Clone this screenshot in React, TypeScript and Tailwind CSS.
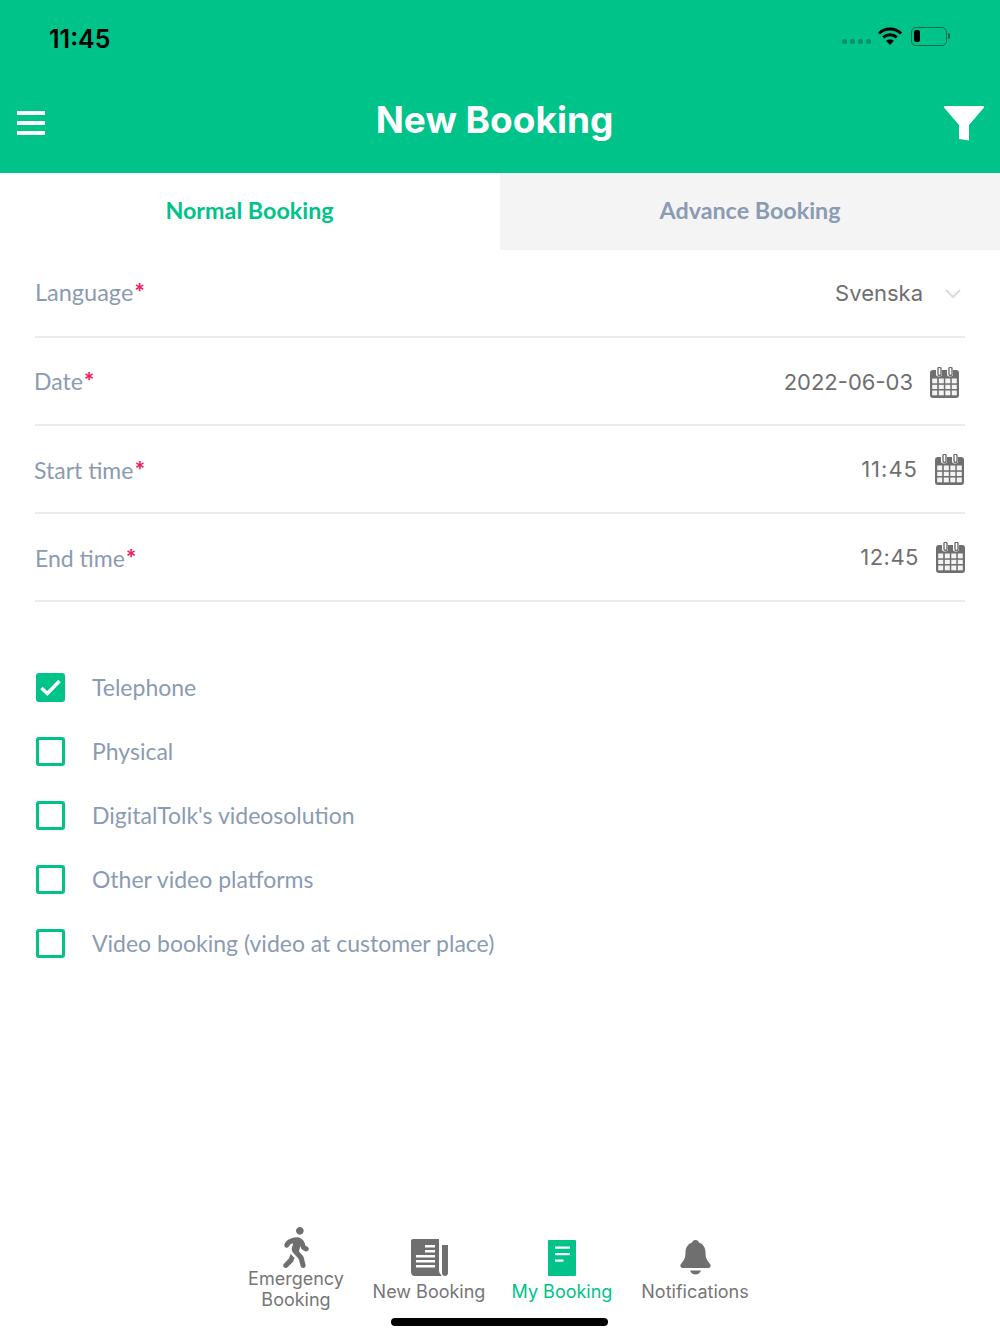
import { FaWalking } from 'react-icons/fa'

function Wifi() {
  return (
    <svg width="26" height="20" viewBox="0 0 26 20" fill="none" stroke="#000" strokeWidth="3">
      <path d="M2 7.5C8 1.6 18 1.6 24 7.5" />
      <path d="M6.2 11.4C10.2 7.8 15.8 7.8 19.8 11.4" />
      <path d="M13 19l-4-4.2c2.3-1.800 5.700-1.800 8 0z" fill="#000" stroke="none" />
    </svg>
  )
}

function Battery() {
  return (
    <div className="flex items-center">
      <div className="flex h-[19px] w-[36px] items-center rounded-[5px] border-[1.5px] border-[#0b6b4e] pl-[2px]">
        <div className="h-[12px] w-[6px] rounded-[2px] bg-black" />
      </div>
      <div className="ml-[1px] h-[6px] w-[2px] rounded-r-sm bg-[#0b6b4e]" />
    </div>
  )
}

function CalendarIcon() {
  return (
    <svg width="29" height="31" viewBox="0 0 29 31" fill="#6f6f6f">
      <path d="M3 3h3v4a2.500 2.500 0 0 0 2.500 2.500h1A2.500 2.500 0 0 0 12 7V3h5v4a2.500 2.500 0 0 0 2.500 2.500h1A2.500 2.500 0 0 0 23 7V3h3a3 3 0 0 1 3 3v22a3 3 0 0 1-3 3H3a3 3 0 0 1-3-3V6a3 3 0 0 1 3-3z" />
      <path d="M9 0a2 2 0 0 1 2 2v5a1.500 1.500 0 0 1-3 0V2a2 2 0 0 1 1-2z" fill="none" stroke="#6f6f6f" strokeWidth="1.400" />
      <path d="M20 0a2 2 0 0 1 2 2v5a1.500 1.500 0 0 1-3 0V2a2 2 0 0 1 1-2z" fill="none" stroke="#6f6f6f" strokeWidth="1.400" />
      <g fill="#f3f3f3">
        <rect x="2.200" y="11.500" width="5" height="4.800" />
        <rect x="8.800" y="11.500" width="5" height="4.800" />
        <rect x="15.300" y="11.500" width="5" height="4.800" />
        <rect x="21.800" y="11.500" width="5" height="4.800" />
        <rect x="2.200" y="17.800" width="5" height="4.200" />
        <rect x="8.800" y="17.800" width="5" height="4.200" />
        <rect x="15.300" y="17.800" width="5" height="4.200" />
        <rect x="21.800" y="17.800" width="5" height="4.200" />
        <rect x="2.200" y="23.500" width="5" height="4.800" />
        <rect x="8.800" y="23.500" width="5" height="4.800" />
        <rect x="15.300" y="23.500" width="5" height="4.800" />
        <rect x="21.800" y="23.500" width="5" height="4.800" />
      </g>
    </svg>
  )
}

function FormRow({ label, value, rowClass, labelClass, valueClass, children }: { label: string; value: string; rowClass?: string; labelClass?: string; valueClass?: string; children: React.ReactNode }) {
  return (
    <div className={`flex h-[88px] items-center justify-between border-b-2 border-[#e9ecef] ${rowClass ?? ''}`}>
      <div className={`font-['Lato',sans-serif] text-[#8a9bb3] ${labelClass ?? ''}`}>
        {label}
        <span className="relative -top-[3px] ml-[1px] font-['Inter',sans-serif] text-[20px] font-semibold leading-none text-[#ee1f5f]">*</span>
      </div>
      <div className={`flex items-center font-['Inter',sans-serif] text-[22px] text-[#6f6f6f] ${valueClass ?? ''}`}>
        <span>{value}</span>
        {children}
      </div>
    </div>
  )
}

function CheckRow({ label, checked }: { label: string; checked?: boolean }) {
  return (
    <div className="flex h-[64px] items-center pl-[36px]">
      <div className={`flex h-[29px] w-[29px] items-center justify-center rounded-[3px] border-[3px] border-[#00c389] ${checked ? 'bg-[#00c389]' : 'bg-white'}`}>
        {checked && (
          <svg width="21" height="17" viewBox="0 0 21 17" fill="none" stroke="#fff" strokeWidth="3.400">
            <path d="M1.500 9l5.800 5.500L19.500 2" />
          </svg>
        )}
      </div>
      <span className="ml-[27px] font-['Lato',sans-serif] text-[23px] text-[#8a9bb3]">{label}</span>
    </div>
  )
}

function NavItem({ icon, label, active, itemClass, labelClass }: { icon: React.ReactNode; label: string; active?: boolean; itemClass?: string; labelClass?: string }) {
  return (
    <div className={`flex flex-col items-center justify-end text-center font-['Inter',sans-serif] text-[18px] leading-[21px] ${active ? 'text-[#00c389]' : 'text-[#767676]'} ${itemClass ?? ''}`}>
      {icon}
      <span className={labelClass ?? 'mt-[5px]'}>{label}</span>
    </div>
  )
}

export default function App() {
  return (
    <div className="flex h-[1334px] w-[1000px] flex-col overflow-hidden bg-white">
      {/* Header */}
      <div className="h-[173px] bg-[#00c389]">
        <div className="flex h-[76px] items-center justify-between pl-[49px] pr-[50px]">
          <span className="mt-[4px] font-['Inter',sans-serif] text-[25px] font-semibold text-black">11:45</span>
          <div className="mb-[4px] flex items-center">
            <div className="mr-[6px] mt-[10px] flex gap-[3px]">
              <div className="h-[5px] w-[5px] rounded-full bg-[#0b8f66]" />
              <div className="h-[5px] w-[5px] rounded-full bg-[#0b8f66]" />
              <div className="h-[5px] w-[5px] rounded-full bg-[#0b8f66]" />
              <div className="h-[5px] w-[5px] rounded-full bg-[#0b8f66]" />
            </div>
            <Wifi />
            <div className="ml-[8px]">
              <Battery />
            </div>
          </div>
        </div>
        <div className="flex h-[90px] items-center justify-between pl-[17px] pr-[16px] pt-[4px]">
          <div className="flex w-[28px] flex-col gap-[6px]">
            <div className="h-[4px] bg-white" />
            <div className="h-[4px] bg-white" />
            <div className="h-[4px] bg-white" />
          </div>
          <h1 className="mb-[6px] font-['Inter',sans-serif] text-[37px] font-bold text-white">New Booking</h1>
          <svg width="40" height="35" viewBox="0 0 40 35" fill="#fff">
            <path d="M1 0h38c1 0 1.400 1 .8 1.800L25 19v15.500L15 33V19L.2 1.800C-.400 1 0 0 1 0z" />
          </svg>
        </div>
      </div>

      {/* Tabs */}
      <div className="grid h-[77px] grid-cols-2 font-['Lato',sans-serif] text-[23.3px] font-bold">
        <div className="flex items-center justify-center pb-[2px] pr-[1px] text-[#00c389]">Normal Booking</div>
        <div className="flex items-center justify-center bg-[#f4f4f4] pb-[2px] text-[#8a9bb3]">Advance Booking</div>
      </div>

      {/* Form */}
      <div className="px-[35px]">
        <FormRow label="Language" value="Svenska" rowClass="pr-[3px]" labelClass="text-[23.5px]" valueClass="pt-[1px]">
          <svg className="ml-[21px]" width="18" height="10" viewBox="0 0 18 10" fill="none" stroke="#dcdcdc" strokeWidth="2">
            <path d="M2 1l7 7 7-7" />
          </svg>
        </FormRow>
        <FormRow label="Date" value="2022-06-03" rowClass="pr-[6px]" labelClass="-ml-[1px] text-[23px]" valueClass="pt-[2px]">
          <div className="ml-[17px]">
            <CalendarIcon />
          </div>
        </FormRow>
        <FormRow label="Start time" value="11:45" rowClass="pr-[1px]" labelClass="-ml-[1px] pt-[2px] text-[23px]" valueClass="tracking-[1px]">
          <div className="ml-[17px]">
            <CalendarIcon />
          </div>
        </FormRow>
        <FormRow label="End time" value="12:45" labelClass="pt-[3px] text-[23px]" valueClass="tracking-[0.5px]">
          <div className="ml-[17px]">
            <CalendarIcon />
          </div>
        </FormRow>
      </div>

      {/* Assignment types */}
      <div className="mt-[53px]">
        <CheckRow label="Telephone" checked />
        <CheckRow label="Physical" />
        <CheckRow label="DigitalTolk's videosolution" />
        <CheckRow label="Other video platforms" />
        <CheckRow label="Video booking (video at customer place)" />
      </div>

      {/* Bottom nav */}
      <div className="mt-auto">
        <div className="flex justify-center pr-[9px]">
          <div className="grid w-[532px] grid-cols-4 items-end">
            <NavItem
              label="Emergency Booking"
              itemClass="-mb-[8px]"
              labelClass="mt-0"
              icon={<FaWalking className="h-[41px] w-[28px] text-[#6f6f6f]" />}
            />
            <NavItem
              label="New Booking"
              icon={
                <svg width="37" height="37" viewBox="0 0 37 37" fill="#6f6f6f">
                  <path d="M2 0h26v31c0 2.500 1 4 3 6H4c-2.500 0-4-1.500-4-4V2C0 .800.800 0 2 0z" />
                  <path d="M31 6h6v28c0 1.500-1 3-3 3-2 0-3-1.500-3-3z" />
                  <g fill="#fff">
                    <rect x="14" y="6" width="10" height="2.500" />
                    <rect x="14" y="11" width="10" height="2.500" />
                    <rect x="5" y="16" width="19" height="2.500" />
                    <rect x="5" y="21" width="19" height="2.500" />
                    <rect x="5" y="26" width="19" height="2.500" />
                  </g>
                </svg>
              }
            />
            <NavItem
              active
              label="My Booking"
              icon={
                <svg width="28" height="36" viewBox="0 0 28 36" fill="#00c389">
                  <rect width="28" height="36" rx="1" />
                  <g fill="#fff">
                    <rect x="7" y="6.500" width="15" height="2.200" />
                    <rect x="7" y="13" width="15" height="2.200" />
                    <rect x="7" y="19.500" width="8.500" height="2.200" />
                  </g>
                </svg>
              }
            />
            <NavItem
              label="Notifications"
              icon={
                <svg width="31" height="36" viewBox="0 0 31 36" fill="#6f6f6f">
                  <path d="M15.500 0c2 0 3 1 3.500 2.600 4.500 1.600 6.500 5.500 6.500 10 0 6 2 8.500 4.500 11.400 1.300 1.600.5 4-1.500 4H2.500c-2 0-2.800-2.400-1.500-4C3.500 21 5.500 18.600 5.500 12.600c0-4.500 2-8.400 6.500-10C12.500 1 13.500 0 15.500 0z" />
                  <path d="M10 30.500h11c-1 2.500-3 4-5.500 4s-4.500-1.500-5.500-4z" />
                </svg>
              }
            />
          </div>
        </div>
        <div className="flex h-[32px] justify-center pr-[1px] pt-[16px]">
          <div className="h-[8px] w-[217px] rounded-full bg-black" />
        </div>
      </div>
    </div>
  )
}
